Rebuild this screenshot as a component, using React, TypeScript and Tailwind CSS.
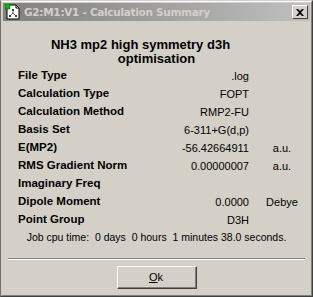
import React from "react";

const rows: { label: string; value: string; unit?: string }[] = [
  { label: "File Type", value: ".log" },
  { label: "Calculation Type", value: "FOPT" },
  { label: "Calculation Method", value: "RMP2-FU" },
  { label: "Basis Set", value: "6-311+G(d,p)" },
  { label: "E(MP2)", value: "-56.42664911", unit: "a.u." },
  { label: "RMS Gradient Norm", value: "0.00000007", unit: "a.u." },
  { label: "Imaginary Freq", value: "" },
  { label: "Dipole Moment", value: "0.0000", unit: "Debye" },
  { label: "Point Group", value: "D3H" },
];

function AppIcon() {
  return (
    <svg width="16" height="16" viewBox="0 0 16 16" className="shrink-0">
      <path d="M2 1 H11 L14 4 V15 H2 Z" fill="#ffffff" stroke="#000000" strokeWidth="1" />
      <path d="M11 1 V4 H14" fill="none" stroke="#000000" strokeWidth="1" />
      <rect x="0" y="0" width="5" height="5" fill="#00c000" stroke="#004000" strokeWidth="0.5" />
      <line x1="8" y1="6" x2="8" y2="9" stroke="#606060" strokeWidth="1" />
      <line x1="8" y1="9" x2="5" y2="12" stroke="#606060" strokeWidth="1" />
      <line x1="8" y1="9" x2="11" y2="12" stroke="#606060" strokeWidth="1" />
      <rect x="7" y="5" width="2" height="2" fill="#404040" />
      <rect x="4" y="11" width="2" height="2" fill="#404040" />
      <rect x="10" y="11" width="2" height="2" fill="#404040" />
    </svg>
  );
}

export default function App() {
  const sans = { fontFamily: '"Liberation Sans", Arial, sans-serif' };
  return (
    <div
      className="w-[313px] h-[297px] bg-[#d4d0c8] border-t border-l border-r border-b border-t-[#d4d0c8] border-l-[#707070] border-r-[#404040] border-b-[#404040] overflow-hidden"
      style={sans}
    >
      <div className="w-full h-full border-t border-l border-r border-b border-t-white border-l-[#d4d0c8] border-r-[#808080] border-b-[#808080] p-[1px] flex flex-col">
        {/* Title bar */}
        <div className="h-[18px] flex items-center bg-gradient-to-r from-[#808080] to-[#c0c0c0] pl-[2px] pr-[2px]">
          <AppIcon />
          <span
            className="ml-[3px] text-[10.5px] font-bold text-[#d4d0c8] whitespace-pre leading-none"
            style={{ fontFamily: '"DejaVu Sans", Verdana, sans-serif', letterSpacing: "-0.3px" }}
          >
            G2:M1:V1 - Calculation Summary
          </span>
          <div className="flex-1" />
          <div className="w-[16px] h-[14px] bg-[#d4d0c8] border-t border-l border-r border-b border-t-white border-l-white border-r-[#404040] border-b-[#404040] flex items-center justify-center">
            <svg width="8" height="7" viewBox="0 0 8 7">
              <path d="M0 0 L2 0 L4 2 L6 0 L8 0 L5 3.5 L8 7 L6 7 L4 5 L2 7 L0 7 L3 3.5 Z" fill="#000000" />
            </svg>
          </div>
        </div>

        {/* Heading */}
        <div className="mt-[17px] text-[13px] font-bold text-black leading-[14px]">
          <div className="text-center pr-[32px]">NH3 mp2 high symmetry d3h</div>
          <div className="text-center">optimisation</div>
        </div>

        {/* Rows */}
        <div className="mt-[1px] flex flex-col">
          {rows.map((r) => (
            <div key={r.label} className="h-[18px] flex items-center text-[11px] text-black">
              <div className="flex-1 pl-[15px] font-bold text-[11.5px]">{r.label}</div>
              <div className="w-[100px] text-right">{r.value}</div>
              <div className="w-[13px]" />
              <div className="w-[40px] text-center">{r.unit ?? ""}</div>
              <div className="w-[8px]" />
            </div>
          ))}
          <div className="h-[18px] flex items-center justify-center text-[10.5px] text-black whitespace-pre">
            Job cpu time:  0 days  0 hours  1 minutes 38.0 seconds.
          </div>
        </div>

        {/* Separator */}
        <div className="mt-[11px] mx-[5px] border-t border-b border-t-[#808080] border-b-white" />

        {/* Button */}
        <div className="mt-[6px] flex justify-center">
          <div className="w-[80px] h-[23px] bg-[#d4d0c8] border-t border-l border-r border-b border-t-white border-l-white border-r-[#404040] border-b-[#404040]">
            <div className="w-full h-full border-r border-b border-r-[#808080] border-b-[#808080] flex items-center justify-center text-[11px] text-black">
              <span>
                <span className="underline">O</span>k
              </span>
            </div>
          </div>
        </div>
      </div>
    </div>
  );
}
